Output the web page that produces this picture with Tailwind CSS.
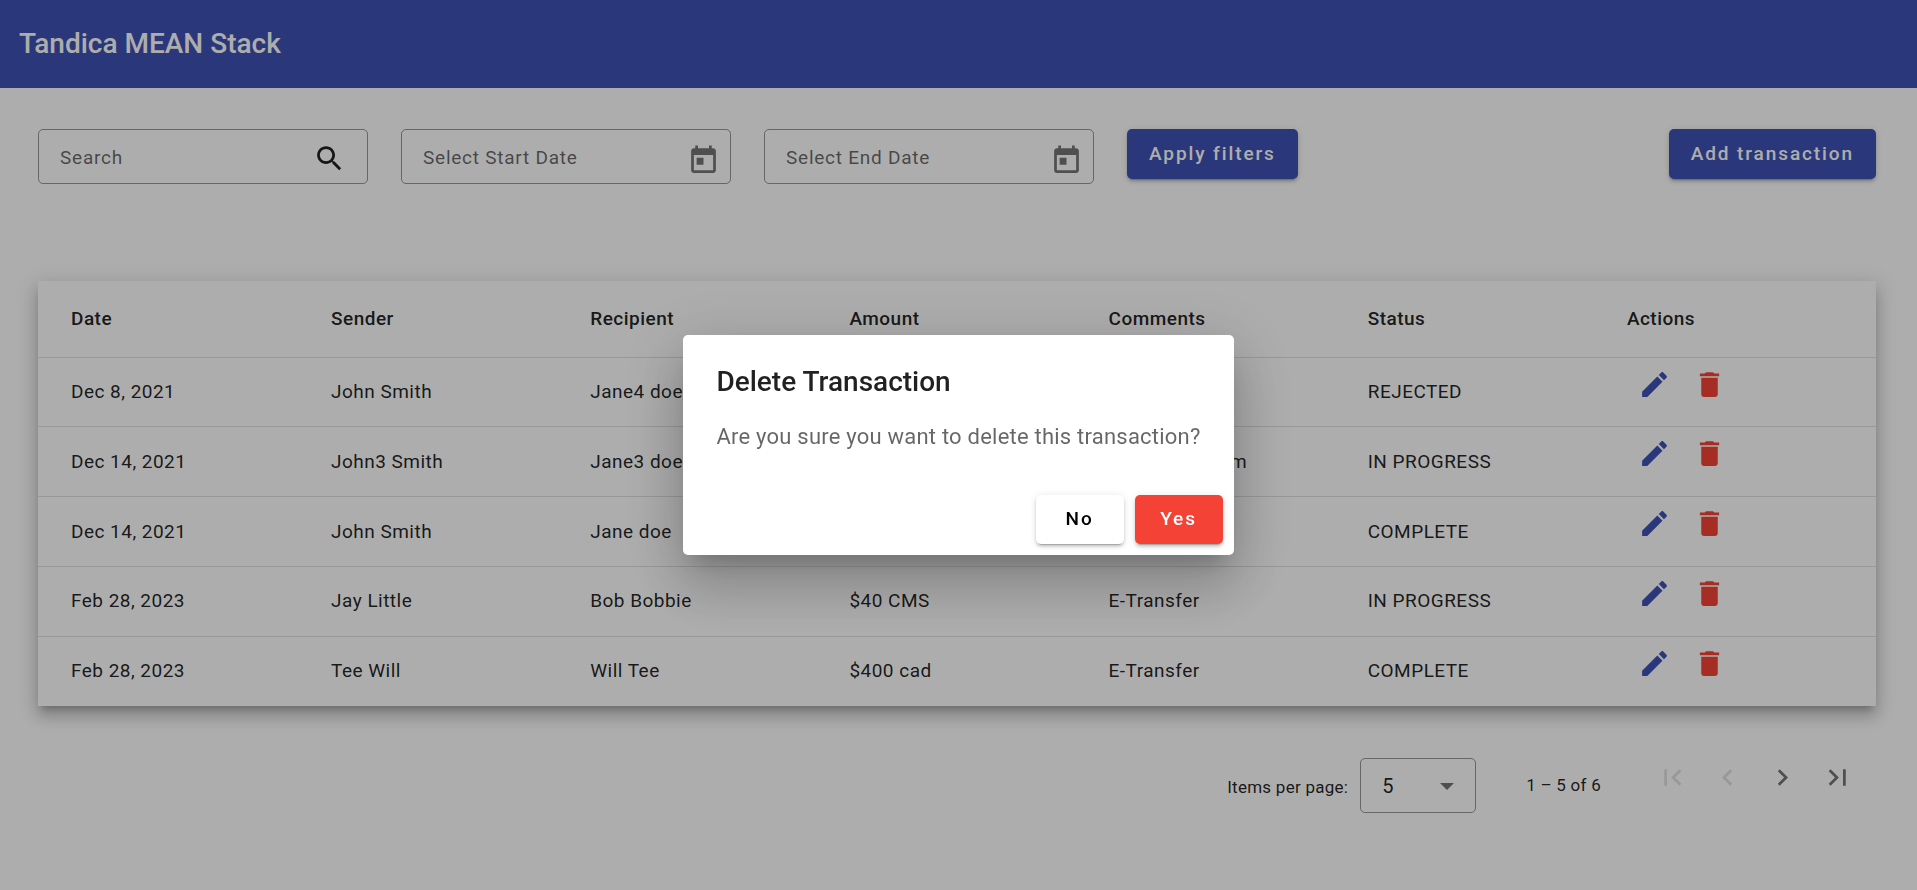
<!DOCTYPE html>
<html lang="en">
<head>
<meta charset="utf-8">
<meta name="viewport" content="width=device-width, initial-scale=1">
<title>Tandica MEAN Stack</title>
<script src="https://cdn.jsdelivr.net/npm/@tailwindcss/browser@4"></script>
</head>
<body class="min-h-screen bg-white font-[Roboto,sans-serif] text-[19px] tracking-wide text-black/87">

<svg class="hidden" aria-hidden="true">
  <symbol id="edit" viewBox="0 0 24 24"><path d="M3 17.25V21h3.75L17.81 9.94l-3.75-3.75L3 17.25zM20.71 7.04c.39-.39.39-1.02 0-1.41l-2.34-2.34c-.39-.39-1.02-.39-1.41 0l-1.83 1.83 3.75 3.75 1.83-1.83z"/></symbol>
  <symbol id="delete" viewBox="0 0 24 24"><path d="M6 19c0 1.1.9 2 2 2h8c1.1 0 2-.9 2-2V7H6v12zM19 4h-3.5l-1-1h-5l-1 1H5v2h14V4z"/></symbol>
  <symbol id="today" viewBox="0 0 24 24"><path d="M19 3h-1V1h-2v2H8V1H6v2H5c-1.11 0-1.99.9-1.99 2L3 19c0 1.1.89 2 2 2h14c1.1 0 2-.9 2-2V5c0-1.1-.9-2-2-2zm0 16H5V8h14v11zM7 10h5v5H7z"/></symbol>
</svg>

<header class="flex h-[88px] items-center bg-[#3f51b5] px-[19px] text-white">
  <h1 class="text-[28px] leading-9 font-medium tracking-normal">Tandica MEAN Stack</h1>
</header>

<main class="pt-[41px] pr-[41px] pl-[38px]">
  <form class="flex items-start gap-[33px]">
    <div class="flex h-[55px] w-[330px] items-center rounded-[5px] border border-black/40 pt-1 pr-[21px] pl-[21px]">
      <input type="text" aria-label="Search" placeholder="Search" class="min-w-0 flex-1 bg-transparent text-[19px] tracking-[0.04em] outline-none placeholder:text-black/60">
      <button type="button" aria-label="Run search"><svg class="size-[33px] fill-black/87" viewBox="0 0 24 24"><path d="M15.5 14h-.79l-.28-.27C15.41 12.59 16 11.11 16 9.5 16 5.91 13.09 3 9.5 3S3 5.91 3 9.5 5.91 16 9.5 16c1.61 0 3.09-.59 4.23-1.57l.27.28v.79l5 4.99L20.49 19l-4.99-5zm-6 0C7.01 14 5 11.99 5 9.5S7.01 5 9.5 5 14 7.01 14 9.5 11.99 14 9.5 14z"/></svg></button>
    </div>
    <div class="flex h-[55px] w-[330px] items-center rounded-[5px] border border-black/40 pt-1 pr-[10px] pl-[21px]">
      <input type="text" aria-label="Select Start Date" placeholder="Select Start Date" class="min-w-0 flex-1 bg-transparent text-[19px] tracking-[0.04em] outline-none placeholder:text-black/60">
      <button type="button" aria-label="Open start date calendar" class="pt-1"><svg class="size-[33px] fill-black/54"><use href="#today"/></svg></button>
    </div>
    <div class="flex h-[55px] w-[330px] items-center rounded-[5px] border border-black/40 pt-1 pr-[10px] pl-[21px]">
      <input type="text" aria-label="Select End Date" placeholder="Select End Date" class="min-w-0 flex-1 bg-transparent text-[19px] tracking-[0.04em] outline-none placeholder:text-black/60">
      <button type="button" aria-label="Open end date calendar" class="pt-1"><svg class="size-[33px] fill-black/54"><use href="#today"/></svg></button>
    </div>
    <button type="button" class="h-[50px] rounded-[5px] bg-[#3f51b5] px-[22px] font-medium tracking-widest text-white shadow-[0_4px_1px_-3px_rgb(0_0_0/0.2),0_3px_3px_0_rgb(0_0_0/0.14),0_1px_7px_0_rgb(0_0_0/0.12)]">Apply filters</button>
    <button type="button" class="ml-auto h-[50px] rounded-[5px] bg-[#3f51b5] px-[22px] font-medium tracking-widest text-white shadow-[0_4px_1px_-3px_rgb(0_0_0/0.2),0_3px_3px_0_rgb(0_0_0/0.14),0_1px_7px_0_rgb(0_0_0/0.12)]">Add transaction</button>
  </form>

  <div class="mt-[97px] bg-white shadow-[0_7px_7px_-4px_rgb(0_0_0/0.2),0_11px_14px_1px_rgb(0_0_0/0.14),0_4px_19px_3px_rgb(0_0_0/0.12)]">
    <table class="h-[425px] w-full table-fixed text-left">
      <colgroup>
        <col class="w-[14.75%]"><col class="w-[14.1%]"><col class="w-[14.1%]"><col class="w-[14.1%]"><col class="w-[14.1%]"><col class="w-[14.1%]"><col>
      </colgroup>
      <thead>
        <tr class="h-[76px] border-b border-black/12 *:pl-[22px] *:font-medium *:first:pl-[33px]">
          <th>Date</th><th>Sender</th><th>Recipient</th><th>Amount</th><th>Comments</th><th>Status</th><th>Actions</th>
        </tr>
      </thead>
      <tbody id="rows" class="divide-y divide-black/12"></tbody>
    </table>
  </div>

  <nav aria-label="Pagination" class="mt-[44px] mr-[11px] flex items-start justify-end text-[17px] tracking-[0.015em]">
    <label for="page-size" class="mt-2 mr-3 flex h-[60px] items-center">Items per page:</label>
    <div class="relative mt-2">
      <select id="page-size" class="h-[55px] w-[116px] appearance-none rounded-[5px] border border-black/40 bg-transparent pl-[21px] text-[20px]"><option>5</option><option>10</option><option>20</option></select>
      <svg class="pointer-events-none absolute top-[25px] right-[22px] h-[7px] w-[14px] fill-black/54" viewBox="0 0 14 7"><path d="M0 0h14L7 7z"/></svg>
    </div>
    <span class="mt-2 mr-[44px] ml-[50px] flex h-[56px] items-center">1 – 5 of 6</span>
    <button type="button" disabled aria-label="First page" class="flex size-[55px] items-center justify-center"><svg class="size-[33px] fill-black/12" viewBox="0 0 24 24"><path d="M18.41 16.59L13.82 12l4.59-4.59L17 6l-6 6 6 6zM6 6h2v12H6z"/></svg></button>
    <button type="button" disabled aria-label="Previous page" class="flex size-[55px] items-center justify-center"><svg class="size-[33px] fill-black/12" viewBox="0 0 24 24"><path d="M15.41 7.41L14 6l-6 6 6 6 1.41-1.41L10.83 12z"/></svg></button>
    <button type="button" aria-label="Next page" class="flex size-[55px] items-center justify-center"><svg class="size-[33px] fill-black/54" viewBox="0 0 24 24"><path d="M10 6L8.59 7.41 13.17 12l-4.58 4.59L10 18l6-6z"/></svg></button>
    <button type="button" aria-label="Last page" class="flex size-[55px] items-center justify-center"><svg class="size-[33px] fill-black/54" viewBox="0 0 24 24"><path d="M5.59 7.41L10.18 12l-4.59 4.59L7 18l6-6-6-6zM16 6h2v12h-2z"/></svg></button>
  </nav>
</main>

<div class="fixed inset-0 flex items-center justify-center bg-black/32">
  <section role="dialog" aria-modal="true" aria-labelledby="dialog-title" class="rounded-[5px] bg-white shadow-[0_15px_21px_-10px_rgb(0_0_0/0.2),0_33px_52px_4px_rgb(0_0_0/0.14),0_12px_63px_11px_rgb(0_0_0/0.12)]">
    <h2 id="dialog-title" class="px-[33px] pt-[27px] text-[28px] leading-10 font-medium tracking-normal">Delete Transaction</h2>
    <p class="px-[33px] pt-[19px] pb-[42px] text-[22px] leading-8 tracking-[0.01em] text-black/60">Are you sure you want to delete this transaction?</p>
    <div class="flex justify-end gap-[11px] px-[11px] pb-[11px]">
      <button type="button" class="h-[49px] w-[88px] rounded-[5px] bg-white font-medium tracking-widest text-black shadow-[0_4px_1px_-3px_rgb(0_0_0/0.2),0_3px_3px_0_rgb(0_0_0/0.14),0_1px_7px_0_rgb(0_0_0/0.12)]">No</button>
      <button type="button" class="h-[49px] w-[88px] rounded-[5px] bg-[#f44336] font-medium tracking-widest text-white shadow-[0_4px_1px_-3px_rgb(0_0_0/0.2),0_3px_3px_0_rgb(0_0_0/0.14),0_1px_7px_0_rgb(0_0_0/0.12)]">Yes</button>
    </div>
  </section>
</div>

<script>
const transactions = [
  ['Dec 8, 2021', 'John Smith', 'Jane4 doe', '', '', 'REJECTED'],
  ['Dec 14, 2021', 'John3 Smith', 'Jane3 doe', '', 'E-Transfer form', 'IN PROGRESS'],
  ['Dec 14, 2021', 'John Smith', 'Jane doe', '', '', 'COMPLETE'],
  ['Feb 28, 2023', 'Jay Little', 'Bob Bobbie', '$40 CMS', 'E-Transfer', 'IN PROGRESS'],
  ['Feb 28, 2023', 'Tee Will', 'Will Tee', '$400 cad', 'E-Transfer', 'COMPLETE'],
];
document.getElementById('rows').innerHTML = transactions.map(cells => `
  <tr class="*:pl-[22px] *:first:pl-[33px]">
    ${cells.map(text => `<td>${text}</td>`).join('')}
    <td class="align-top"><div class="flex">
      <button type="button" aria-label="Edit" class="flex h-[53px] w-[55px] items-center justify-center"><svg class="size-[33px] fill-[#3f51b5]"><use href="#edit"/></svg></button>
      <button type="button" aria-label="Delete" class="flex h-[53px] w-[55px] items-center justify-center"><svg class="size-[33px] fill-[#f44336]"><use href="#delete"/></svg></button>
    </div></td>
  </tr>`).join('');
</script>
</body>
</html>
